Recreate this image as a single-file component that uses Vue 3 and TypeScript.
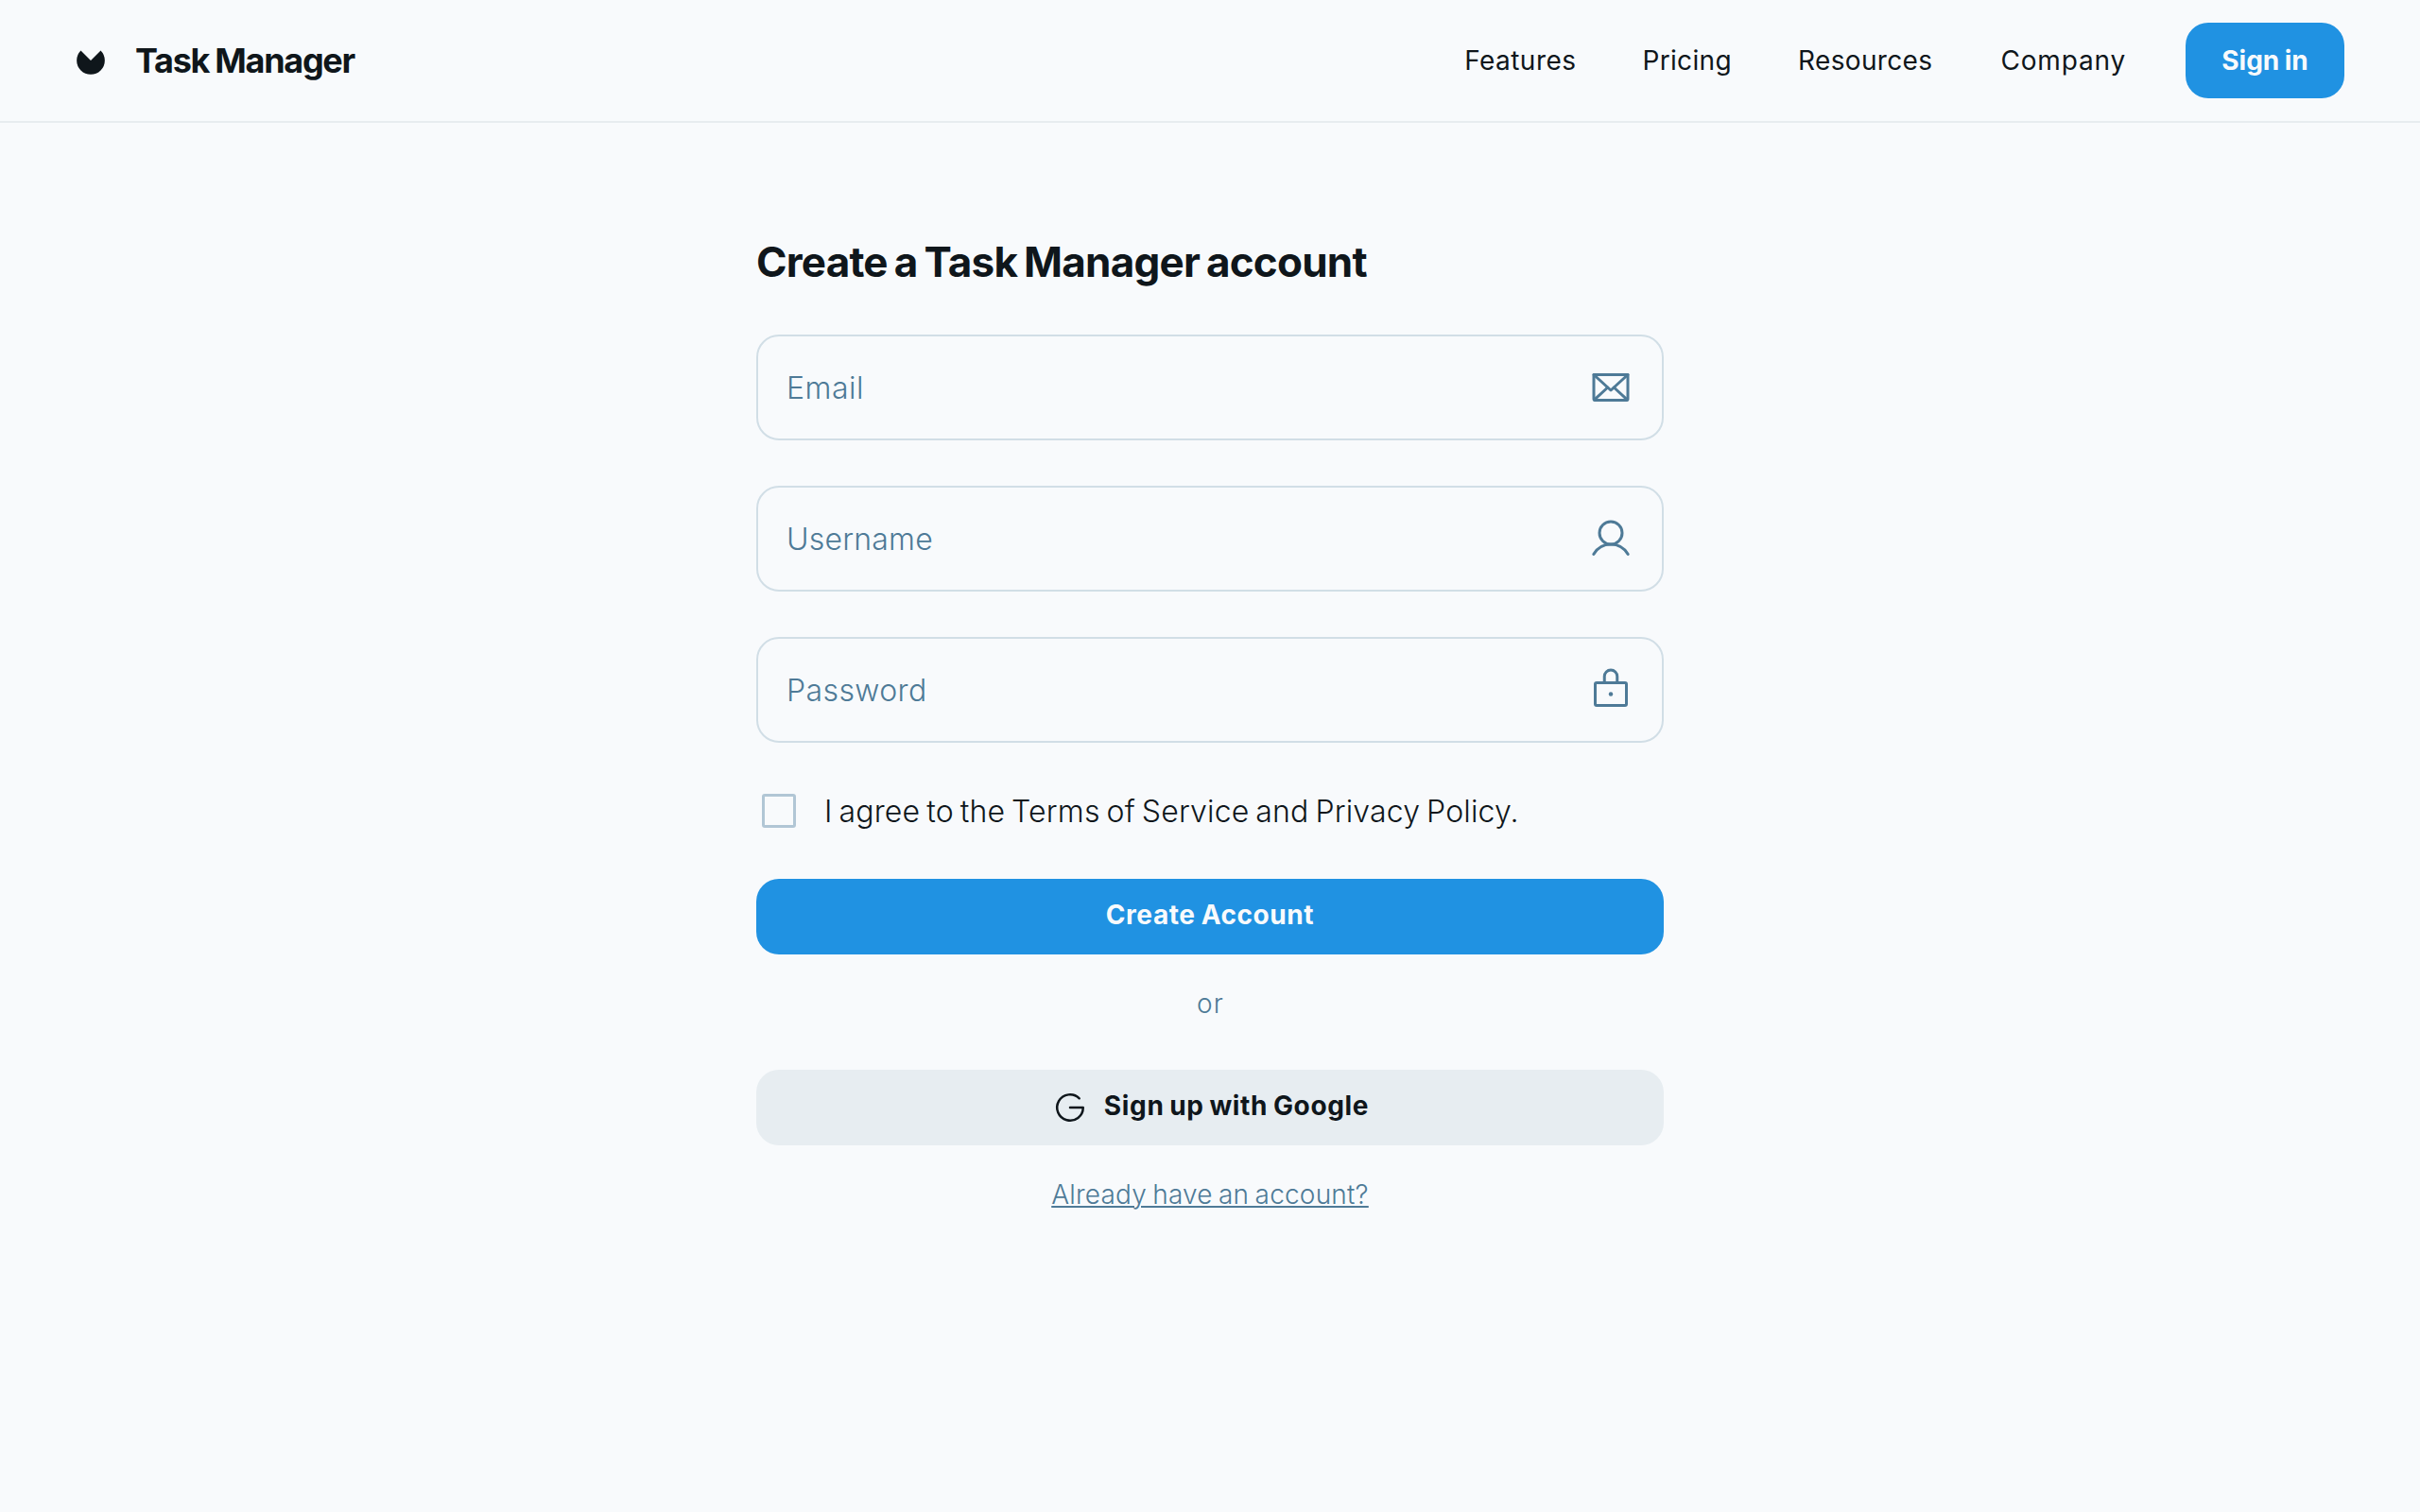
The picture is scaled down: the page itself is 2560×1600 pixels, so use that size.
<script setup lang="ts">
import { reactive, ref } from 'vue'

type FieldKey = 'email' | 'username' | 'password'

interface Field {
  key: FieldKey
  label: string
  type: string
}

const links: string[] = ['Features', 'Pricing', 'Resources', 'Company']

const fields: Field[] = [
  { key: 'email', label: 'Email', type: 'email' },
  { key: 'username', label: 'Username', type: 'text' },
  { key: 'password', label: 'Password', type: 'password' },
]

const form = reactive<Record<FieldKey, string>>({ email: '', username: '', password: '' })
const agreed = ref(false)
</script>

<template>
  <div class="page">
    <header class="header">
      <div class="brand">
        <svg class="brand-mark" viewBox="0 0 32 32" aria-hidden="true">
          <path d="M16 16 L5.5 5.5 A14.85 14.85 0 1 0 26.5 5.5 Z" fill="currentColor" />
        </svg>
        <span class="brand-name">Task Manager</span>
      </div>
      <nav class="nav">
        <a v-for="link in links" :key="link" class="nav-link" :class="link.toLowerCase()">{{ link }}</a>
      </nav>
      <button class="btn primary sign-in" type="button">Sign in</button>
    </header>

    <main class="main">
      <h1 class="title">Create a Task Manager account</h1>

      <form class="form" @submit.prevent>
        <label v-for="field in fields" :key="field.key" class="field" :class="field.key">
          <input v-model="form[field.key]" :type="field.type" :placeholder="field.label" autocomplete="off" />
          <svg class="field-icon" viewBox="0 0 256 256" aria-hidden="true">
            <template v-if="field.key === 'email'">
              <path d="M32 56H224V192a8 8 0 0 1-8 8H40a8 8 0 0 1-8-8Z" />
              <path d="M224 56 128 144 32 56" />
              <path d="M110.5 128 34.5 197.7" />
              <path d="M221.5 197.7 145.5 128" />
            </template>
            <template v-else-if="field.key === 'username'">
              <circle cx="128" cy="96" r="64" />
              <path d="M31 216a112 112 0 0 1 194 0" />
            </template>
            <template v-else>
              <rect x="40" y="88" width="176" height="128" rx="8" />
              <path d="M92 88V52a36 36 0 0 1 72 0V88" />
              <circle class="dot" cx="128" cy="152" r="12" />
            </template>
          </svg>
        </label>

        <label class="terms">
          <input v-model="agreed" class="checkbox" type="checkbox" />
          <span class="terms-text">I agree to the Terms of Service and Privacy Policy.</span>
        </label>

        <button class="btn primary create" type="submit">Create Account</button>
      </form>

      <p class="divider">or</p>

      <button class="btn google" type="button">
        <svg class="google-icon" viewBox="0 0 256 256" aria-hidden="true">
          <path d="M128 128h88a88.1 88.1 0 1 1-25.8-62.2" />
        </svg>
        <span>Sign up with Google</span>
      </button>

      <a class="login">Already have an account?</a>
    </main>
  </div>
</template>

<style>
body {
  background: #f8fafc;
}
</style>

<style scoped>
.page {
  box-sizing: border-box;
  min-height: 1600px;
  background: #f8fafc;
  color: #0f161b;
  font-family: Inter, "Liberation Sans", sans-serif;
}

.header {
  box-sizing: border-box;
  display: flex;
  align-items: center;
  height: 130px;
  padding: 0 80px;
  border-bottom: 2px solid #e7ecef;
}

.brand {
  display: flex;
  align-items: center;
  gap: 31px;
}

.brand-mark {
  width: 32px;
  height: 32px;
}

.brand-name {
  font-size: 36px;
  font-weight: 700;
  line-height: 46px;
  letter-spacing: -1.3px;
  word-spacing: -1px;
}

.nav {
  display: flex;
  gap: 72px;
  margin-left: auto;
  margin-right: 63px;
}

.nav-link {
  font-size: 28px;
  font-weight: 400;
  line-height: 42px;
  letter-spacing: 0.35px;
}

.nav-link.features {
  margin-right: -2px;
  letter-spacing: 0.45px;
}

.nav-link.pricing {
  margin-right: -2px;
}

.nav-link.company {
  letter-spacing: 0.83px;
}

.btn {
  box-sizing: border-box;
  display: flex;
  align-items: center;
  justify-content: center;
  height: 80px;
  padding: 0;
  border: 0;
  border-radius: 24px;
  color: inherit;
  font-family: inherit;
  font-size: 28px;
  font-weight: 700;
  line-height: 42px;
}

.primary {
  background: #2092e2;
  color: #f8fafc;
}

.sign-in {
  width: 168px;
  letter-spacing: 0;
  word-spacing: -1.2px;
}

.main {
  display: flex;
  flex-direction: column;
  width: 960px;
  margin: 0 auto;
  padding-top: 119px;
}

.title {
  margin: 0 0 49px;
  font-size: 44px;
  font-weight: 700;
  line-height: 56px;
  letter-spacing: -0.78px;
  word-spacing: -2.7px;
}

.form {
  display: flex;
  flex-direction: column;
  gap: 48px;
}

.field {
  box-sizing: border-box;
  display: flex;
  align-items: center;
  height: 112px;
  padding: 0 30px;
  border: 2px solid #d1dee6;
  border-radius: 24px;
  color: #4e7a97;
}

.field input {
  flex: 1;
  min-width: 0;
  height: 48px;
  padding: 0;
  border: 0;
  outline: 0;
  background: transparent;
  color: #0f161b;
  font-family: inherit;
  font-size: 32px;
  font-weight: 300;
  letter-spacing: inherit;
}

.field input::placeholder {
  color: #4e7a97;
  opacity: 1;
}

.field.email {
  letter-spacing: 0.5px;
}

.field.username {
  letter-spacing: 0.2px;
}

.field.password {
  letter-spacing: 0.4px;
}

.field-icon {
  width: 48px;
  height: 48px;
  fill: none;
  stroke: currentColor;
  stroke-width: 16;
  stroke-linecap: round;
  stroke-linejoin: round;
}

.field-icon .dot {
  fill: currentColor;
  stroke: none;
}

.terms {
  display: flex;
  align-items: center;
  gap: 30px;
  height: 48px;
  padding-left: 6px;
  font-size: 32px;
  font-weight: 300;
  line-height: 46px;
  letter-spacing: 0.16px;
  word-spacing: -2.2px;
  white-space: nowrap;
}

.terms-text {
  padding-top: 2px;
}

.checkbox {
  box-sizing: border-box;
  flex: none;
  width: 36px;
  height: 36px;
  margin: 0;
  appearance: none;
  border: 3px solid #b1c6d5;
  border-radius: 3px;
}

.create {
  padding-bottom: 4px;
  letter-spacing: 0.57px;
  word-spacing: -1px;
}

.divider {
  margin: 30px 0 48px;
  padding-left: 1px;
  color: #4e7a97;
  font-size: 28px;
  font-weight: 300;
  line-height: 44px;
  letter-spacing: 1.1px;
  text-align: center;
}

.google {
  gap: 16px;
  background: #e7edf1;
  letter-spacing: 0.65px;
  word-spacing: -1.5px;
}

.google span {
  padding-bottom: 4px;
}

.google-icon {
  width: 40px;
  height: 40px;
  fill: none;
  stroke: currentColor;
  stroke-width: 16;
  stroke-linecap: round;
  stroke-linejoin: round;
}

.login {
  align-self: center;
  margin-top: 30px;
  color: #4e7a97;
  font-size: 28px;
  font-weight: 300;
  line-height: 44px;
  letter-spacing: 0.2px;
  word-spacing: -1.8px;
  text-decoration: underline;
  text-decoration-thickness: 2px;
  text-underline-offset: 2px;
}
</style>
